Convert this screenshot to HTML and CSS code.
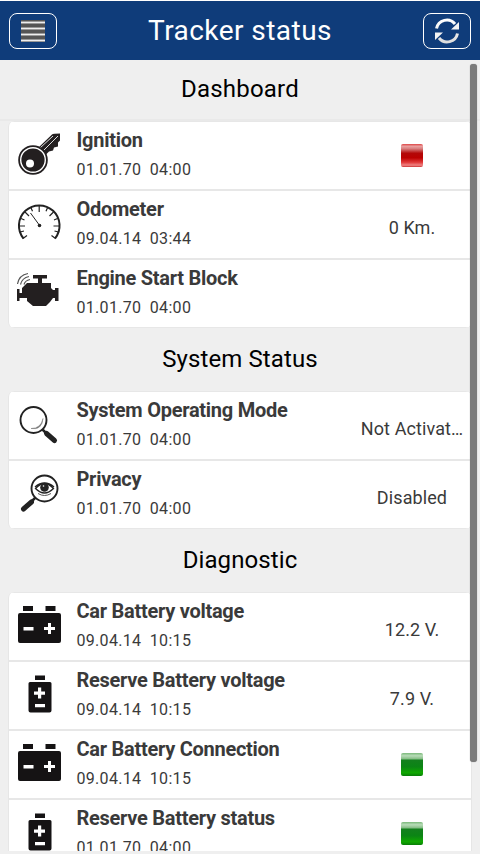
FILE: index.html
```html
<!DOCTYPE html>
<html lang="en">
<head>
<meta charset="utf-8">
<title>Tracker status</title>
<link rel="stylesheet" href="styles.css">
</head>
<body>
<svg width="0" height="0" class="defs">
  <defs>
    <linearGradient id="arrowFill" x1="0" y1="0" x2="0" y2="1"><stop offset="0" stop-color="#fff"/><stop offset="1" stop-color="#ddd"/></linearGradient>
    <symbol id="carBattery" viewBox="0 0 46 46">
      <path fill="#151314" d="M7 6h10v5H7zM29.500 6h10v5h-10zM4 13h39q2 0 2 2v26q0 2-2 2H4q-2 0-2-2V15q0-2 2-2z"/>
      <path fill="#fff" d="M7.500 27h10v3.500h-10zM28 27h11v3H28zM32 23h3v11h-3z"/>
    </symbol>
    <symbol id="reserveBattery" viewBox="0 0 46 46">
      <path fill="#151314" d="M19 6.500h10v4.500H19zM14 13h20q1.500 0 1.500 1.500v27q0 2-2 2h-19q-2 0-2-2v-27q0-1.500 1.500-1.500z"/>
      <path fill="#fff" d="M18 22.500h11v3.200H18zM22 18.500h3.200v11H22zM19 35h10v3.200H19z"/>
    </symbol>
  </defs>
</svg>
<header class="bar">
  <button class="btn" aria-label="Menu"><span class="menu"><i></i><i></i><i></i><i></i></span></button>
  <h1>Tracker status</h1>
  <button class="btn" aria-label="Refresh">
    <svg width="26" height="26" viewBox="0 0 26 26">
      <path d="M2.500 10.500A10.500 10.500 0 0 1 21 6M23.500 15.500A10.500 10.500 0 0 1 5 20" fill="none" stroke="url(#arrowFill)" stroke-width="3"/>
      <path d="M25 4v7.500h-8zM1 22v-7.500h8z" fill="#f4f4f4"/>
    </svg>
  </button>
</header>
<main class="content">
  <h2 class="first">Dashboard</h2>
  <section class="card">
    <div class="row">
      <svg class="icon" viewBox="0 0 46 46">
        <path d="M22 19L36 5.500q1-1 8-1v7l-2 2v4l-4 1-1 3-4 1-4 4z" fill="#231f20"/>
        <path d="M27 22L42 7M24 19L37 7" stroke="#ddd" stroke-width="1" fill="none"/>
        <circle cx="17" cy="31" r="14.800" fill="#231f20"/><circle cx="17" cy="31" r="12.300" fill="none" stroke="#fff" stroke-width="1.400"/><circle cx="14" cy="34.500" r="4" fill="#fff"/>
      </svg>
      <div class="info"><h3>Ignition</h3><p>01.01.70&nbsp; 04:00</p></div>
      <div class="value"><span class="led red"></span></div>
    </div>
    <div class="row">
      <svg class="icon" viewBox="0 0 46 46" fill="none" stroke="#222">
        <path d="M7.500 40.500A20.300 20.300 0 1 1 39 40.500" stroke-width="2"/>
        <path d="M3 28h6M43.500 28h-6M23.200 8v6M9 14l4 4M37.500 14l-4 4M15 9.700l1.500 3.500M31.500 9.700L30 13.200M5 20.500l3.500 1.500M41.500 20.500L38 22M4 34l4-1M42.500 34l-4-1M7 40.500l4-3M39.500 40.500l-4-3" stroke-width="1.200"/>
        <path d="M24 28L14.500 15" stroke-width="1"/><circle cx="23.500" cy="27.500" r="1.800" fill="#222" stroke="none"/>
      </svg>
      <div class="info"><h3>Odometer</h3><p>09.04.14&nbsp; 03:44</p></div>
      <div class="value"><span>0 Km.</span></div>
    </div>
    <div class="row">
      <svg class="icon" viewBox="0 0 46 46">
        <path fill="#231f20" d="M17 8h14v3.500h-5V16h9v5l2 2h2v-2h3.500v13H39v-3h-2l-3 4-4 4H17l-6-5v-3H3.500v3H1V22h2.500v4H6v-5l5-5h11v-4.500h-5z"/>
        <path d="M1.500 17Q3 8 12 6.500M4.500 17.500Q6 11 13 9.500M8 17.500q1-4 6-5" fill="none" stroke="#555" stroke-width="1.200"/>
      </svg>
      <div class="info"><h3>Engine Start Block</h3><p>01.01.70&nbsp; 04:00</p></div>
      <div class="value"></div>
    </div>
  </section>
  <h2>System Status</h2>
  <section class="card">
    <div class="row">
      <svg class="icon" viewBox="0 0 46 46">
        <circle cx="17.500" cy="21" r="13" fill="#fff" stroke="#222" stroke-width="1.900"/>
        <path d="M15 29.500q10 0 12-10-1 12-12 10z" fill="#777" stroke="#777" stroke-width=".5"/>
        <path d="M26.500 30.500l4 4" stroke="#222" stroke-width="2.500"/><path d="M30.500 34.500l8 7" stroke="#222" stroke-width="5" stroke-linecap="round"/>
      </svg>
      <div class="info"><h3>System Operating Mode</h3><p>01.01.70&nbsp; 04:00</p></div>
      <div class="value"><span>Not Activat…</span></div>
    </div>
    <div class="row">
      <svg class="icon" viewBox="0 0 46 46">
        <circle cx="28.500" cy="20.500" r="13" fill="#fff" stroke="#222" stroke-width="1.900"/>
        <path d="M19.500 20.500q9-10 18 0-9 9-18 0z" fill="#fff" stroke="#222" stroke-width="1.300"/><path d="M19 19q9.500-8 19 0" fill="none" stroke="#222" stroke-width="1.500"/>
        <circle cx="28.500" cy="19.500" r="4.300" fill="#222"/><circle cx="27.500" cy="18" r=".8" fill="#fff"/><path d="M22 25.500q6.500 4 13 0" stroke="#555" fill="none"/>
        <path d="M19.500 29.500l-4 4" stroke="#222" stroke-width="2.500"/><path d="M15.500 34L7.500 41" stroke="#222" stroke-width="5" stroke-linecap="round"/>
      </svg>
      <div class="info"><h3>Privacy</h3><p>01.01.70&nbsp; 04:00</p></div>
      <div class="value"><span>Disabled</span></div>
    </div>
  </section>
  <h2>Diagnostic</h2>
  <section class="card">
    <div class="row">
      <svg class="icon"><use href="#carBattery"/></svg>
      <div class="info"><h3>Car Battery voltage</h3><p>09.04.14&nbsp; 10:15</p></div>
      <div class="value"><span>12.2 V.</span></div>
    </div>
    <div class="row">
      <svg class="icon"><use href="#reserveBattery"/></svg>
      <div class="info"><h3>Reserve Battery voltage</h3><p>09.04.14&nbsp; 10:15</p></div>
      <div class="value"><span>7.9 V.</span></div>
    </div>
    <div class="row">
      <svg class="icon"><use href="#carBattery"/></svg>
      <div class="info"><h3>Car Battery Connection</h3><p>09.04.14&nbsp; 10:15</p></div>
      <div class="value"><span class="led green"></span></div>
    </div>
    <div class="row">
      <svg class="icon"><use href="#reserveBattery"/></svg>
      <div class="info"><h3>Reserve Battery status</h3><p>01.01.70&nbsp; 04:00</p></div>
      <div class="value"><span class="led green"></span></div>
    </div>
  </section>
  <div class="thumb"></div>
</main>
</body>
</html>
```
FILE: styles.css
```css
* { box-sizing: border-box; margin: 0; padding: 0; }
body {
  height: 854px;
  padding-top: 1px;
  overflow: hidden;
  background: linear-gradient(#fff 1px, #efefef 1px);
  font-family: Roboto, sans-serif;
  color: #3a3a3a;
}
.defs { position: absolute; }
.bar {
  height: 59px;
  padding: 0 9px;
  display: flex;
  align-items: center;
  justify-content: space-between;
  background: #0f3c7a;
}
.bar h1 { font-size: 28px; font-weight: 400; letter-spacing: .45px; color: #fff; white-space: nowrap; }
.btn {
  width: 48px;
  height: 36px;
  border: 1.5px solid #fff;
  border-radius: 8px;
  background: none;
  display: flex;
  align-items: center;
  justify-content: center;
}
.menu { display: grid; gap: 3px; width: 24px; padding: 1px 0 0; background: #555; }
.menu i { height: 3px; border-top: 1px solid #999; border-bottom: 1px solid #999; background: #eee; }
.content { position: relative; height: 791px; overflow: hidden; }
h2 {
  height: 63px;
  line-height: 62px;
  font-size: 24px;
  font-weight: 400;
  letter-spacing: .1px;
  text-align: center;
  color: #000;
}
h2.first { height: 61px; line-height: 59px; letter-spacing: .2px; border-bottom: 2px solid #e9e9e9; }
.card {
  margin: 0 8px;
  border: solid #e6e6e6;
  border-width: 0 1px;
  border-radius: 6px;
  overflow: hidden;
  background: #fff;
}
.row {
  height: 69px;
  display: grid;
  grid-template-columns: 46px 1fr 118px;
  column-gap: 14px;
  padding-left: 7px;
  border-top: 2px solid #e7e7e7;
}
.card .row:first-child { height: 68px; border-top-width: 1px; }
.card .row:last-child { height: 70px; border-bottom: 1px solid #e7e7e7; }
.icon { width: 46px; height: 46px; margin-top: 7px; display: block; }
.info { white-space: nowrap; align-self: start; padding-top: 6px; }
h3 { font-size: 20px; line-height: 24px; font-weight: 700; letter-spacing: -.27px; }
.info p { margin-top: 8px; font-size: 16px; line-height: 20px; letter-spacing: .3px; }
.info { margin-left: .5px; }
.value { display: flex; justify-content: center; padding-top: 25px; font-size: 18px; line-height: 24px; white-space: nowrap; letter-spacing: .1px; }
.led { width: 22px; height: 23px; margin-top: -3px; border-radius: 2px; }
.red { background: linear-gradient(#d44 0, #eaa0a0 10%, #d98080 20%, #b30808 40%, #b00 60%, #e13b3b 80%, #f08484 92%, #c33); }
.green { background: linear-gradient(#7ab87a 0, #b8dcb8 12%, #8bc08b 24%, #13801d 32%, #0b8514 60%, #10a800 86%, #087c08); }
.thumb { position: absolute; top: 4px; left: 470px; width: 7px; height: 698px; border-radius: 3px; background: #7a7a7a; box-shadow: 0 0 1px #888; }
```
